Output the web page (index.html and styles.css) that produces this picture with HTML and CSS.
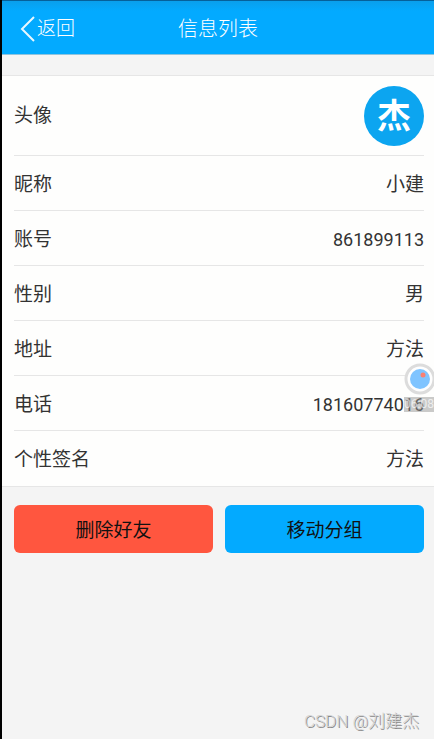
FILE: index.html
```html
<!DOCTYPE html>
<html lang="zh-CN">
<head>
  <meta charset="UTF-8" />
  <meta name="viewport" content="width=device-width, initial-scale=1.0" />
  <title>信息列表</title>
  <link rel="stylesheet" href="styles.css">
</head>
<body>
  <header class="navbar">
    <a class="back" href="#">
      <svg class="back-icon" viewBox="0 0 16 28" aria-hidden="true">
        <path d="M14 2 L2 14 L14 26" />
      </svg>
      <span>返回</span>
    </a>
    <h1>信息列表</h1>
  </header>

  <main>
    <dl class="info">
      <div class="row row-avatar">
        <dt>头像</dt>
        <dd><span class="avatar">杰</span></dd>
      </div>
      <div class="row">
        <dt>昵称</dt>
        <dd>小建</dd>
      </div>
      <div class="row">
        <dt>账号</dt>
        <dd class="number">861899113</dd>
      </div>
      <div class="row">
        <dt>性别</dt>
        <dd>男</dd>
      </div>
      <div class="row">
        <dt>地址</dt>
        <dd>方法</dd>
      </div>
      <div class="row">
        <dt>电话</dt>
        <dd class="number">18160774016</dd>
      </div>
      <div class="row">
        <dt>个性签名</dt>
        <dd>方法</dd>
      </div>
    </dl>

    <div class="actions">
      <button type="button" class="btn btn-delete">删除好友</button>
      <button type="button" class="btn btn-move">移动分组</button>
    </div>
  </main>

  <!-- screen recorder -->
  <div class="recorder">
    <svg class="recorder-icon" viewBox="0 0 32 32" aria-hidden="true">
      <circle cx="16" cy="16" r="14" fill="#fefefe" stroke="#dcdcdc" stroke-width="3" />
      <circle cx="16" cy="16" r="10" fill="#7fc4ff" />
      <circle cx="19" cy="12" r="2.5" fill="#f98072" />
    </svg>
    <span class="recorder-time">06:08</span>
  </div>

  <div class="watermark">CSDN @刘建杰</div>
</body>
</html>
```
FILE: styles.css
```css
* { box-sizing: border-box; }
body { position: relative; min-height: 100vh; margin: 0; border-left: 2px solid #000; background: #f4f4f4; color: #333; font-family: Roboto, "Noto Sans CJK SC", sans-serif; font-size: 19px; line-height: 28px; overflow-x: hidden; }

.navbar { display: grid; grid-template-columns: 1fr auto 1fr; align-items: center; height: 55px; padding: 2px 18px 0; border-top: 1px solid #05609a; border-bottom: 1px solid #8fc4de; background: linear-gradient(#0a9fec, #03aaff 10px); color: #fff; font-weight: 300; }
.navbar h1 { margin: 0; font-size: 20px; font-weight: 300; }
.back { display: flex; align-items: center; gap: 1px; color: #fff; text-decoration: none; }
.back-icon { width: 16px; height: 28px; fill: none; stroke: #e8f7ff; stroke-width: 2; }

.info { margin: 20px 0 0; padding: 0 10px 0 12px; border-top: 1px solid #e6e6e6; border-bottom: 1px solid #e6e6e6; background: #fefefd; }
.row { display: flex; align-items: center; justify-content: space-between; height: 55px; padding-top: 3px; border-bottom: 1px solid #e6e6e6; }
.row:last-child { border-bottom: none; }
.row-avatar { height: 80px; padding-top: 0; }
.row dd { margin: 0; }
.number { font-size: 18px; }
.avatar { display: flex; align-items: center; justify-content: center; width: 60px; height: 60px; border-radius: 50%; background: #0ca5f0; color: #fff; font-size: 34px; font-weight: 700; }

.actions { display: flex; gap: 12px; padding: 18px 10px 18px 12px; }
.btn { flex: 1; height: 48px; padding: 3px 0 0; border: none; border-radius: 6px; color: #111; font: inherit; cursor: pointer; }
.btn-delete { background: #ff563f; }
.btn-move { background: #03aaff; }

.recorder { position: absolute; top: 363px; right: 0; width: 30px; }
.recorder-icon { display: block; width: 32px; height: 32px; }
.recorder-time { display: block; height: 15px; margin-top: 2px; background: rgba(150, 150, 150, 0.5); color: rgba(255, 255, 255, 0.7); font-size: 12px; line-height: 15px; }

.watermark { position: absolute; right: 15px; bottom: 4px; color: #d4d4d4; font-size: 17px; font-weight: 300; text-shadow: 1px 1px 0 #888; }
```
